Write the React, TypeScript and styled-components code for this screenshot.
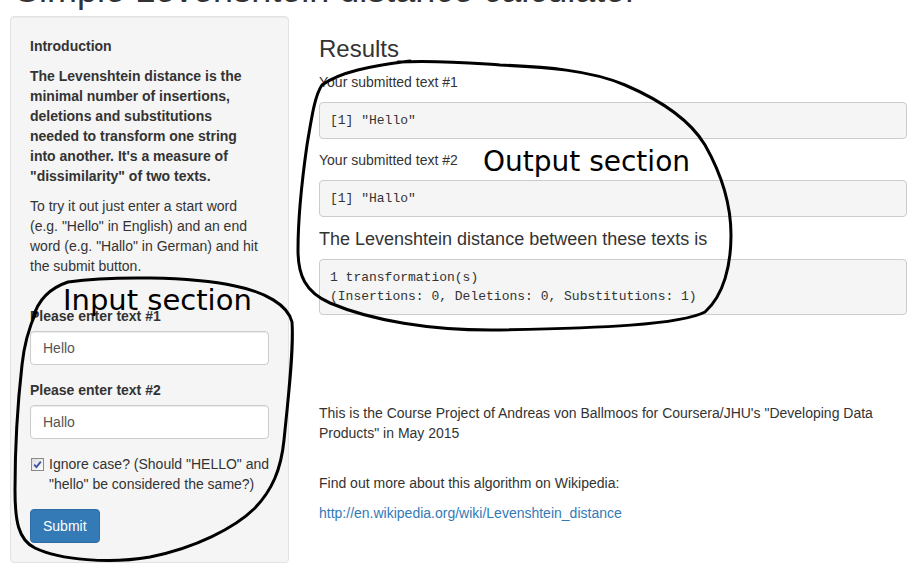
import styled, { createGlobalStyle } from "styled-components";

const GlobalStyle = createGlobalStyle`
  html, body {
    margin: 0;
    background: #fff;
  }
  body {
    font-family: "Liberation Sans", Arial, sans-serif;
    font-size: 14px;
    line-height: 20px;
    color: #333;
  }
`;

const Page = styled.div`
  position: relative;
  display: flow-root;
  height: 573px;
  overflow: hidden;
  padding: 0 9px 0 10px;
  box-sizing: border-box;
`;

const Title = styled.h2`
  margin: -30px 0 6px 5px;
  height: 40px;
  font-size: 36px;
  font-weight: 500;
  line-height: 40px;
  white-space: nowrap;
  color: #333;
`;

const Columns = styled.div`
  display: grid;
  grid-template-columns: 279px 588px;
  column-gap: 30px;
  align-items: start;
`;

const Well = styled.div`
  padding: 19px;
  background: #f5f5f5;
  border: 1px solid #e3e3e3;
  border-radius: 4px;
  box-shadow: inset 0 1px 1px rgba(0, 0, 0, 0.05);
`;

const SectionHead = styled.div`
  font-weight: bold;
  margin-bottom: 10px;
`;

const Para = styled.p<{ $bold?: boolean; $gap?: number }>`
  margin: 0 0 ${({ $gap = 10 }) => $gap}px;
  font-weight: ${({ $bold }) => ($bold ? "bold" : "normal")};
`;

const FormGroup = styled.div`
  margin-bottom: 15px;
`;

const Label = styled.label`
  display: block;
  font-weight: bold;
  margin-bottom: 5px;
`;

const TextInput = styled.input`
  display: block;
  width: 100%;
  height: 34px;
  box-sizing: border-box;
  padding: 6px 12px;
  font: inherit;
  color: #555;
  background: #fff;
  border: 1px solid #ccc;
  border-radius: 4px;
  box-shadow: inset 0 1px 1px rgba(0, 0, 0, 0.075);
  outline: none;
`;

const CheckRow = styled.label`
  display: flex;
  gap: 5px;
  align-items: flex-start;
  margin-bottom: 15px;
  padding-left: 1px;
`;

const CheckText = styled.span`
  white-space: nowrap;
`;

const CheckBox = styled.span`
  flex: none;
  width: 11px;
  height: 11px;
  margin-top: 4px;
  border: 1px solid #8a8a8a;
  background: linear-gradient(135deg, #dcdcdc, #fff);
  display: flex;
  align-items: center;
  justify-content: center;
`;

const SubmitButton = styled.button`
  display: block;
  height: 34px;
  padding: 6px 12px;
  font: inherit;
  color: #fff;
  background: #337ab7;
  border: 1px solid #2e6da4;
  border-radius: 4px;
`;

const Main = styled.div``;

const Heading = styled.h3<{ $size: number; $top: number }>`
  margin: ${({ $top }) => $top}px 0 0;
  font-size: ${({ $size }) => $size}px;
  font-weight: 500;
  line-height: 1.1;
`;

const OutputLabel = styled.div<{ $top: number }>`
  margin-top: ${({ $top }) => $top}px;
`;

const Pre = styled.pre<{ $top: number }>`
  margin: ${({ $top }) => $top}px 0 0;
  padding: 8px 10px;
  font-family: "Liberation Mono", "Courier New", monospace;
  font-size: 13px;
  line-height: 19px;
  color: #333;
  background: #f5f5f5;
  border: 1px solid #ccc;
  border-radius: 4px;
`;

const Footer = styled.div`
  margin-top: 88px;
`;

const WikiLink = styled.a`
  color: #337ab7;
  text-decoration: none;
`;

const Scribble = styled.svg`
  position: absolute;
  left: 0;
  top: 0;
  pointer-events: none;
`;

const Note = styled.span<{ $x: number; $y: number; $size: number }>`
  position: absolute;
  left: ${({ $x }) => $x}px;
  top: ${({ $y }) => $y}px;
  font-family: "DejaVu Sans", Verdana, sans-serif;
  font-size: ${({ $size }) => $size}px;
  line-height: 1;
  color: #000;
  white-space: nowrap;
  pointer-events: none;
`;

export default function App() {
  return (
    <>
      <GlobalStyle />
      <Page>
        <Title>Simple Levenshtein distance calculator</Title>
        <Columns>
          <Well>
            <SectionHead>Introduction</SectionHead>
            <Para $bold>
              The Levenshtein distance is the<br />
              minimal number of insertions,<br />
              deletions and substitutions<br />
              needed to transform one string<br />
              into another. It's a measure of<br />
              "dissimilarity" of two texts.
            </Para>
            <Para $gap={30}>
              To try it out just enter a start word<br />
              (e.g. "Hello" in English) and an end<br />
              word (e.g. "Hallo" in German) and hit<br />
              the submit button.
            </Para>
            <FormGroup>
              <Label htmlFor="text1">Please enter text #1</Label>
              <TextInput id="text1" defaultValue="Hello" />
            </FormGroup>
            <FormGroup>
              <Label htmlFor="text2">Please enter text #2</Label>
              <TextInput id="text2" defaultValue="Hallo" />
            </FormGroup>
            <CheckRow>
              <CheckBox>
                <svg width="9" height="9" viewBox="0 0 9 9">
                  <path d="M1.2 4.6 L3.4 7 L7.8 1.6" fill="none" stroke="#3b4fa6" strokeWidth="1.8" />
                </svg>
              </CheckBox>
              <CheckText>
                Ignore case? (Should "HELLO" and<br />
                "hello" be considered the same?)
              </CheckText>
            </CheckRow>
            <SubmitButton>Submit</SubmitButton>
          </Well>

          <Main>
            <Heading $size={24} $top={20}>Results</Heading>
            <OutputLabel $top={10}>Your submitted text #1</OutputLabel>
            <Pre $top={10}>[1] "Hello"</Pre>
            <OutputLabel $top={11}>Your submitted text #2</OutputLabel>
            <Pre $top={10}>[1] "Hallo"</Pre>
            <Heading $size={18} $top={13}>The Levenshtein distance between these texts is</Heading>
            <Pre $top={9}>
              1 transformation(s){"\n"}(Insertions: 0, Deletions: 0, Substitutions: 1)
            </Pre>
            <Footer>
              <Para $gap={30}>
                This is the Course Project of Andreas von Ballmoos for Coursera/JHU's "Developing Data<br />
                Products" in May 2015
              </Para>
              <Para>Find out more about this algorithm on Wikipedia:</Para>
              <WikiLink href="#">http://en.wikipedia.org/wiki/Levenshtein_distance</WikiLink>
            </Footer>
          </Main>
        </Columns>

        <Scribble width="916" height="573" viewBox="0 0 916 573">
          <g fill="none" stroke="#000" strokeWidth="3" strokeLinecap="round" strokeLinejoin="round">
            <path d="M33 318 C38 300 50 288 68 282 C110 276 190 276 235 286 C265 292 288 305 292 322 C294 350 288 400 284 440 C281 470 272 490 255 508 C235 528 195 548 150 557 C110 564 60 560 35 548 C18 540 15 520 15 490 C15 450 18 400 22 365 C24 345 28 330 36 312" />
            <path d="M398 62 C440 60 470 63 500 65 C545 67 590 70 625 85 C660 100 690 120 705 145 C722 175 731 205 731 235 C731 265 724 295 705 312 C680 325 600 328 500 330 C430 331 370 320 330 303 C305 292 298 275 298 250 C298 215 302 180 307 145 C312 115 315 95 322 85 C340 72 370 66 410 61" />
          </g>
        </Scribble>
        <Note $x={63} $y={286} $size={29}>Input section</Note>
        <Note $x={483} $y={148} $size={28}>Output section</Note>
      </Page>
    </>
  );
}
